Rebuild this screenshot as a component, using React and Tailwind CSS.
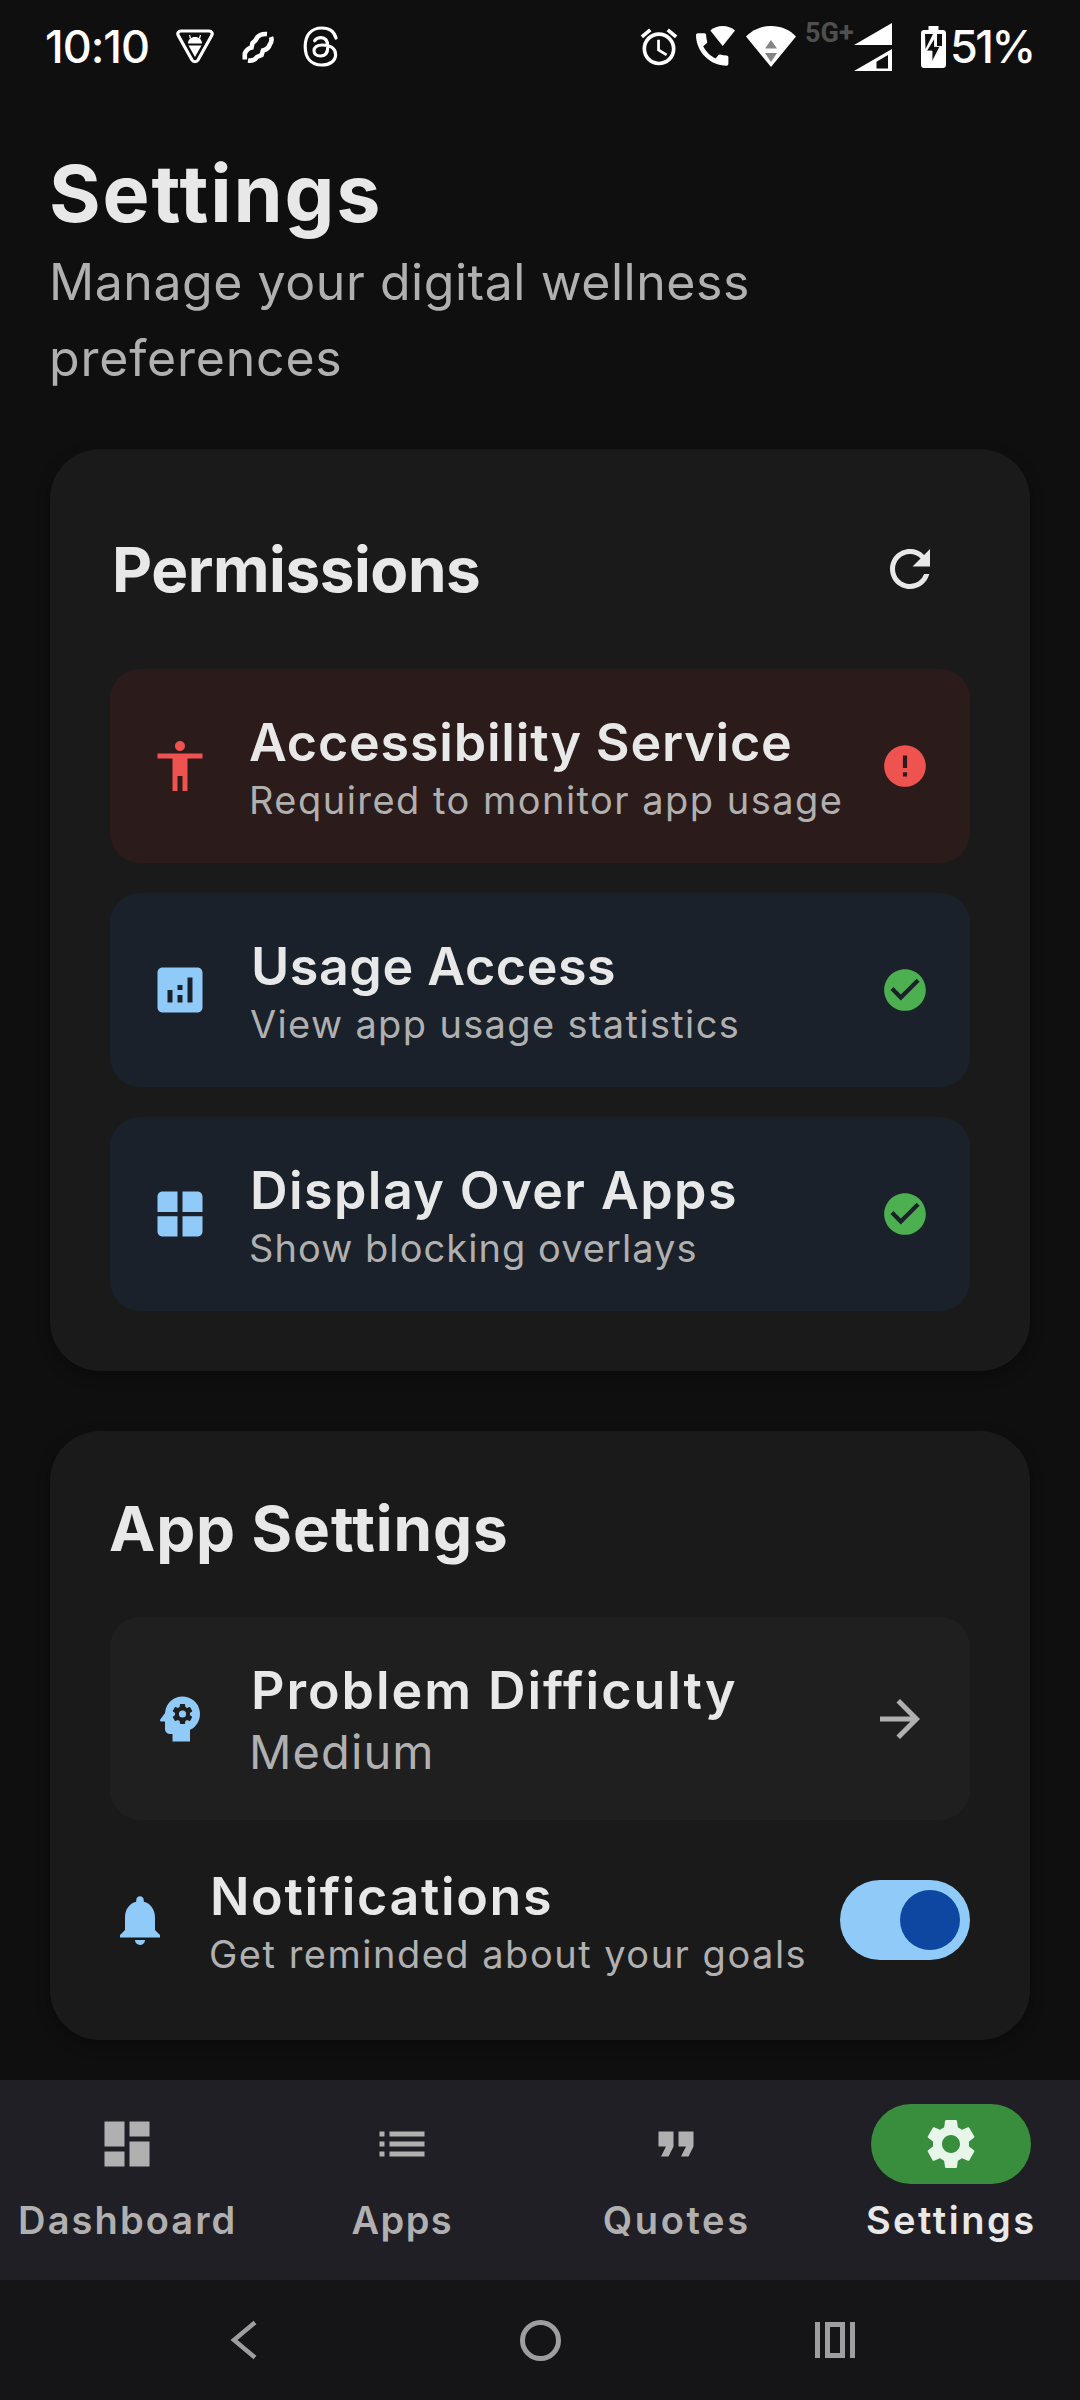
import React from "react";
import {
  MdAccessibility,
  MdAlarm,
  MdAnalytics,
  MdArrowForward,
  MdCheckCircle,
  MdDashboard,
  MdError,
  MdFormatQuote,
  MdList,
  MdNotifications,
  MdPsychology,
  MdRefresh,
  MdSettings,
} from "react-icons/md";

function TriangleBugIcon() {
  return (
    <svg viewBox="0 0 38 35" className="h-[35px] w-[38px]" fill="none">
      <path d="M5 2h28c2.600 0 4 2.400 2.700 4.500L22 31c-1.400 2.300-4.600 2.300-6 0L2.300 6.500C1 4.400 2.400 2 5 2z" stroke="#fff" strokeWidth="3.200" />
      <path d="M14.500 9.500L13.500 6M23.500 9.500l1-3.500" stroke="#fff" strokeWidth="1.200" />
      <path d="M12 14.500c0-4 3-6.500 7-6.500s7 2.500 7 6.500zM12.500 16.500h13L19 28z" fill="#fff" />
    </svg>
  );
}

function LinkIcon() {
  return (
    <svg viewBox="0 0 32 32" className="h-8 w-8" fill="none" stroke="#fff" strokeWidth="4.600">
      <path d="M2.800 28.500V22.500Q5 17.500 9.500 16.500L10.500 12Q14 9.500 15.500 6Q18.500 2.500 25 3" />
      <path d="M6 29.500Q12 30.500 15 26L19.500 24L21 19.500Q26.500 18 27.800 13.500Q30.500 10 29 6" />
    </svg>
  );
}

function ThreadsIcon() {
  return (
    <svg viewBox="0 0 36 41" className="h-[41px] w-9" fill="none" stroke="#fff" strokeWidth="3.200" strokeLinecap="round">
      <path d="M33 12C31.200 5.400 26.200 2 18.800 2 8 2 2.200 9.200 2.200 20.500S8 39 18.800 39c8.200 0 13.800-4.300 13.800-10.200 0-6.600-5.900-9.800-13.200-9.800-5.200 0-8.400 2.200-8.400 5.800 0 3.200 2.700 5.200 6.300 5.200 4.800 0 7.500-3.200 7.500-9.300 0-5.700-2.300-9-6.800-9-2.900 0-5 1.100-6.300 3" />
    </svg>
  );
}

function WifiCallIcon() {
  return (
    <svg viewBox="0 0 39 41" className="h-[41px] w-[39px]" fill="#fff">
      <path
        transform="translate(-5.400 1.900) scale(1.800)"
        d="M20.010 15.380c-1.230 0-2.420-.2-3.530-.56-.35-.12-.74-.03-1.010.24l-1.570 1.970c-2.830-1.350-5.480-3.900-6.890-6.830l1.950-1.660c.27-.28.35-.67.24-1.020-.37-1.110-.56-2.300-.56-3.530 0-.54-.45-.99-.99-.99H4.190C3.650 3 3 3.240 3 3.990 3 13.280 10.730 21 20.010 21c.71 0 .99-.63.99-1.180v-3.450c0-.54-.45-.99-.99-.99z"
      />
      <path d="M14.300 4.600C17.500 1.600 22 0 26.700 0S35.800 1.600 39 4.600L26.700 20z" />
    </svg>
  );
}

function WifiIcon() {
  return (
    <svg viewBox="0 0 50 41" className="h-[41px] w-[50px]">
      <path d="M0 10.500C6 4 15 0 25 0s19 4 25 10.500L25 41z" fill="#fff" />
      <path d="M19 22.500L25 14l6 8.500zM19 27h12l-6 9z" fill="#858585" />
    </svg>
  );
}

function SignalIcon() {
  return (
    <svg viewBox="0 0 38 48" className="h-12 w-[38px]">
      <path d="M0 22L38 0v22z" fill="#fff" />
      <path fillRule="evenodd" d="M0 48L38 26v22zM22.500 45.500h11.500V32l-11.500 6.700z" fill="#fff" />
    </svg>
  );
}

function BatteryIcon() {
  return (
    <svg viewBox="0 0 25 42" className="h-[42px] w-[25px]">
      <path d="M7.500 0h10v4H22c1.700 0 3 1.300 3 3v32c0 1.700-1.300 3-3 3H3c-1.700 0-3-1.300-3-3V7c0-1.700 1.300-3 3-3h4.500z" fill="#fff" />
      <path d="M4 8h8L4.500 23zM16 8h5v12h-5z" fill="#0f0f0f" />
      <path d="M13.500 12v8.500h5.500L11 36V25H5.500z" fill="#0f0f0f" stroke="#fff" strokeWidth="0.800" />
    </svg>
  );
}

function OverlayIcon({ className }) {
  return (
    <svg viewBox="0 0 24 24" className={className} fill="currentColor">
      <path d="M11 11.200H3V5c0-1.100.9-2 2-2h6zM13 11.200V3h6c1.100 0 2 .9 2 2v6.200zM11 12.900V21H5c-1.100 0-2-.9-2-2v-6.100zM13 12.900h8V19c0 1.100-.9 2-2 2h-6z" />
    </svg>
  );
}

function StatusBar() {
  return (
    <div className="flex h-[93px] items-center pl-[45px] text-white">
      <span className="w-[131px] text-[45px] font-medium leading-none tracking-[-1px]">10:10</span>
      <div className="flex items-center">
        <TriangleBugIcon />
        <div className="ml-7"><LinkIcon /></div>
        <div className="ml-[29px]"><ThreadsIcon /></div>
      </div>
      <div className="ml-[298px] flex items-center">
        <MdAlarm className="size-[44px]" />
        <div className="ml-[15px]"><WifiCallIcon /></div>
        <div className="ml-[11px]"><WifiIcon /></div>
        <span className="mb-[26px] ml-[9px] w-[49px] whitespace-nowrap font-['Roboto'] text-[27px] font-bold leading-none text-[#4f4f4f]">5G+</span>
        <SignalIcon />
        <div className="ml-[29px]"><BatteryIcon /></div>
        <span className="ml-1 text-[45px] font-medium leading-none tracking-[-2.500px]">51%</span>
      </div>
    </div>
  );
}

function Labels({ title, titleClass, subtitle, subtitleClass }) {
  return (
    <div className="flex flex-1 flex-col whitespace-nowrap">
      <span className={`text-[52px] font-semibold leading-[67px] text-[#e8e8e8] ${titleClass}`}>{title}</span>
      <span className={`text-[#b0b0b0] ${subtitleClass}`}>{subtitle}</span>
    </div>
  );
}

const permissions = [
  {
    title: "Accessibility Service",
    titleClass: "tracking-[0.800px] -ml-px",
    subtitle: "Required to monitor app usage",
    subtitleClass: "text-[38px] leading-[48px] tracking-[1.470px] -ml-px",
    Icon: MdAccessibility,
    granted: false,
  },
  {
    title: "Usage Access",
    titleClass: "tracking-[0.550px] ml-px",
    subtitle: "View app usage statistics",
    subtitleClass: "text-[38px] leading-[48px] tracking-[1.350px]",
    Icon: MdAnalytics,
    granted: true,
  },
  {
    title: "Display Over Apps",
    titleClass: "tracking-[1.420px]",
    subtitle: "Show blocking overlays",
    subtitleClass: "text-[38px] leading-[48px] tracking-[1.060px] -ml-px",
    Icon: OverlayIcon,
    granted: true,
  },
];

function PermissionRow({ item }) {
  const { Icon, granted } = item;
  return (
    <div className={`flex h-[194px] items-center rounded-[30px] px-10 ${granted ? "bg-[#1a212a]" : "bg-[#2c1b1b]"}`}>
      <Icon className={`mr-10 size-[60px] ${granted ? "text-[#90caf9]" : "text-[#ef5350]"}`} />
      <Labels {...item} />
      {granted ? (
        <MdCheckCircle className="size-[50px] text-[#4caf50]" />
      ) : (
        <MdError className="size-[50px] text-[#ef5350]" />
      )}
    </div>
  );
}

function Card({ className, children }) {
  return (
    <section className={`mx-[50px] rounded-[50px] bg-[#1a1a1a] px-[60px] shadow-[0_5px_14px_rgba(0,0,0,0.35)] ${className}`}>
      {children}
    </section>
  );
}

const tabs = [
  { label: "Dashboard", Icon: MdDashboard, tracking: "tracking-[2.100px]" },
  { label: "Apps", Icon: MdList, tracking: "tracking-[1.400px]" },
  { label: "Quotes", Icon: MdFormatQuote, tracking: "tracking-[2.600px]" },
  { label: "Settings", Icon: MdSettings, tracking: "tracking-[2.500px]", active: true },
];

function TabBar() {
  return (
    <nav className="grid h-[200px] grid-cols-4 gap-x-5 bg-[#201f25] pr-[2px] pt-6">
      {tabs.map(({ label, Icon, tracking, active }) => (
        <div key={label} className="flex flex-col items-center">
          <div className={`flex h-20 w-40 items-center justify-center rounded-full ${active ? "bg-[#388e3c] text-[#e8f5e9]" : "text-[#b0b0b0]"}`}>
            <Icon className="size-[60px]" />
          </div>
          <span className={`mt-[13px] pl-px text-[38px] font-semibold leading-[46px] ${tracking} ${active ? "text-[#e8e8e8]" : "text-[#b0b0b0]"}`}>
            {label}
          </span>
        </div>
      ))}
    </nav>
  );
}

function SystemNav() {
  return (
    <div className="flex h-[120px] items-center justify-between bg-[#151517] pl-[229px] pr-[225px] text-[#9e9e9e]">
      <svg viewBox="0 0 28 40" className="h-10 w-7" fill="none" stroke="currentColor" strokeWidth="4.500">
        <path d="M26 2.500L5 20l21 17.500" />
      </svg>
      <div className="ml-2 size-[41px] rounded-full border-[5px] border-current" />
      <div className="flex h-9 gap-[5px]">
        <div className="w-[5px] bg-current" />
        <div className="w-5 border-[5px] border-current" />
        <div className="w-[5px] bg-current" />
      </div>
    </div>
  );
}

export default function App() {
  return (
    <div className="flex h-[2400px] w-[1080px] flex-col overflow-hidden bg-[#0f0f0f] font-['Inter',sans-serif]">
      <StatusBar />
      <main className="flex-1">
        <header className="px-[50px] pt-[50px]">
          <h1 className="-ml-px text-[79px] font-bold leading-[101px] tracking-[1.850px] text-[#e8e8e8]">Settings</h1>
          <p className="-ml-px h-[205px] text-[50px] leading-[76px] tracking-[0.550px] text-[#b0b0b0]">
            Manage your digital wellness
            <br />
            <span className="tracking-[0.800px]">preferences</span>
          </p>
        </header>

        <Card className="py-[60px]">
          <div className="mb-10 flex h-[120px] items-center justify-between pl-[2px] pr-[30px]">
            <h2 className="text-[62px] font-bold leading-[75px] tracking-[-0.450px] text-[#e8e8e8]">Permissions</h2>
            <MdRefresh className="size-[60px] text-[#e8e8e8]" />
          </div>
          <div className="flex flex-col gap-[30px]">
            {permissions.map((item) => (
              <PermissionRow key={item.title} item={item} />
            ))}
          </div>
        </Card>

        <Card className="mt-[60px] pb-[60px] pt-[60px]">
          <h2 className="-ml-px mb-[51px] text-[62px] font-bold leading-[75px] tracking-[0.870px] text-[#e8e8e8]">App Settings</h2>
          <div className="mb-10 flex h-[203px] items-center rounded-[30px] bg-[#1f1f1f] px-10">
            <MdPsychology className="mr-10 size-[60px] text-[#90caf9]" />
            <Labels
              title="Problem Difficulty"
              titleClass="tracking-[1.950px] ml-px"
              subtitle="Medium"
              subtitleClass="text-[47px] leading-[56px] tracking-[1.100px] -ml-px"
            />
            <MdArrowForward className="size-[60px] text-[#b0b0b0]" />
          </div>
          <div className="flex h-[120px] items-center">
            <MdNotifications className="mr-10 size-[60px] text-[#90caf9]" />
            <Labels
              title="Notifications"
              titleClass="tracking-[1.640px]"
              subtitle="Get reminded about your goals"
              subtitleClass="text-[38px] leading-[48px] tracking-[1.500px] -ml-px"
            />
            <div className="flex h-20 w-[130px] items-center justify-end rounded-full bg-[#90caf9] pr-[10px]">
              <div className="size-[60px] rounded-full bg-[#0d47a1]" />
            </div>
          </div>
        </Card>
      </main>
      <TabBar />
      <SystemNav />
    </div>
  );
}
